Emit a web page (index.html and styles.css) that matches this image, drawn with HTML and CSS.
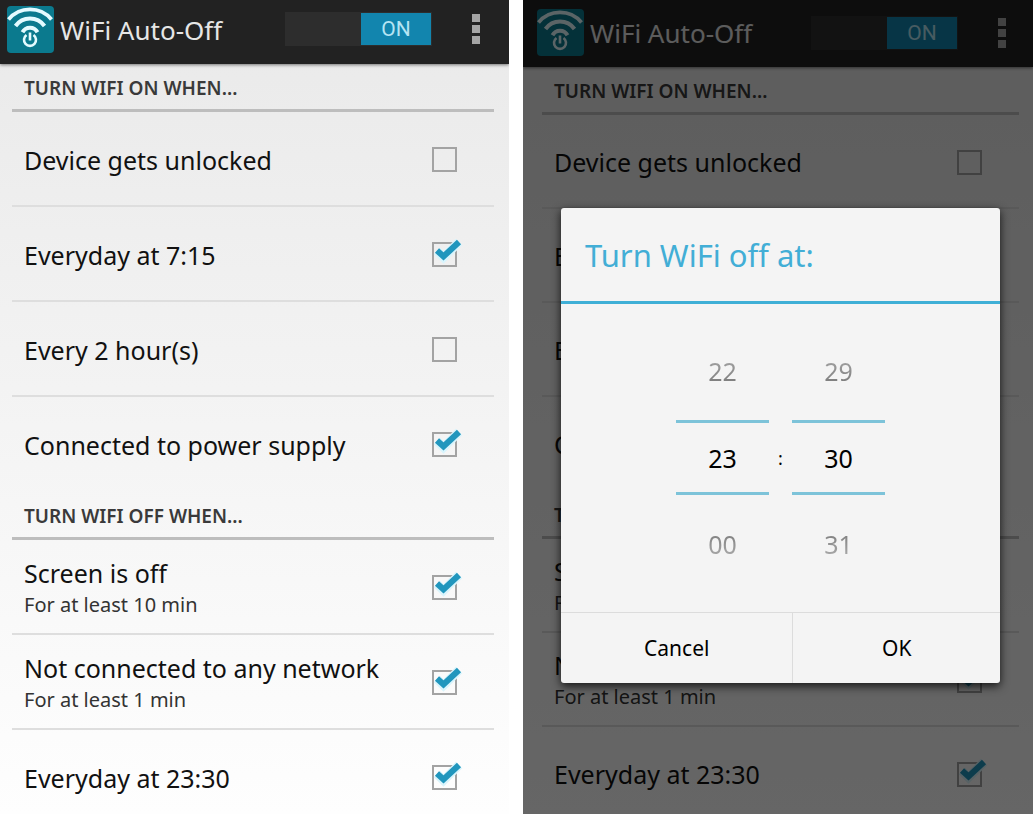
FILE: index.html
```html
<!DOCTYPE html>
<html lang="en">
<head>
  <meta charset="UTF-8">
  <title>WiFi Auto-Off</title>
  <link rel="stylesheet" href="styles.css">
</head>
<body>
  <svg width="0" height="0" class="sprites" aria-hidden="true">
    <symbol id="logo" viewBox="0 0 47 47">
      <rect width="47" height="47" rx="4" fill="#0b7a8e"/>
      <g fill="none" stroke="#e4fbff">
        <path d="M1.500 13.500A28 28 0 0 1 44.500 13.500" stroke-width="3.800"/>
        <path d="M8.500 20A17.800 17.800 0 0 1 37.500 20" stroke-width="4"/>
        <path d="M15.500 26.300A8.500 8.500 0 0 1 30.500 26.300" stroke-width="4"/>
        <path d="M19.500 29A6 6 0 1 0 26.500 29" stroke-width="2.600"/>
        <path d="M23 26.500V34.500" stroke-width="2.600"/>
      </g>
    </symbol>
    <symbol id="tick" viewBox="0 0 34 30">
      <path d="M6 14L12.500 20.500L28 5" fill="none" stroke="#d9f4fc" stroke-width="9"/>
      <path d="M6 13.500L12.500 19.500L28 5" fill="none" stroke="#2196bd" stroke-width="6"/>
    </symbol>
    <symbol id="dots" viewBox="0 0 9 30">
      <path d="M0 0h8v8H0zM0 11h8v8H0zM0 22h8v8H0z" fill="#a5a5a5"/>
    </symbol>
  </svg>

  <div class="screens">
    <section class="screen">
      <header class="bar">
        <svg class="logo"><use href="#logo"/></svg>
        <h1>WiFi Auto-Off</h1>
        <button class="switch" role="switch" aria-checked="true"><span>ON</span></button>
        <button class="menu" aria-label="More options"><svg><use href="#dots"/></svg></button>
      </header>
      <main class="list">
        <h2>TURN WIFI ON WHEN...</h2>
        <label class="row"><span class="text">Device gets unlocked</span>
          <span class="check"><input type="checkbox"><svg><use href="#tick"/></svg></span></label>
        <label class="row"><span class="text">Everyday at 7:15</span>
          <span class="check"><input type="checkbox" checked><svg><use href="#tick"/></svg></span></label>
        <label class="row"><span class="text">Every 2 hour(s)</span>
          <span class="check"><input type="checkbox"><svg><use href="#tick"/></svg></span></label>
        <label class="row last"><span class="text">Connected to power supply</span>
          <span class="check"><input type="checkbox" checked><svg><use href="#tick"/></svg></span></label>
        <h2>TURN WIFI OFF WHEN...</h2>
        <label class="row"><span class="text">Screen is off<small>For at least 10 min</small></span>
          <span class="check"><input type="checkbox" checked><svg><use href="#tick"/></svg></span></label>
        <label class="row"><span class="text">Not connected to any network<small>For at least 1 min</small></span>
          <span class="check"><input type="checkbox" checked><svg><use href="#tick"/></svg></span></label>
        <label class="row last"><span class="text">Everyday at 23:30</span>
          <span class="check"><input type="checkbox" checked><svg><use href="#tick"/></svg></span></label>
      </main>
    </section>

    <section class="screen dimmed">
      <header class="bar">
        <svg class="logo"><use href="#logo"/></svg>
        <h1>WiFi Auto-Off</h1>
        <button class="switch" role="switch" aria-checked="true"><span>ON</span></button>
        <button class="menu" aria-label="More options"><svg><use href="#dots"/></svg></button>
      </header>
      <main class="list">
        <h2>TURN WIFI ON WHEN...</h2>
        <label class="row"><span class="text">Device gets unlocked</span>
          <span class="check"><input type="checkbox"><svg><use href="#tick"/></svg></span></label>
        <label class="row"><span class="text">Everyday at 7:15</span>
          <span class="check"><input type="checkbox" checked><svg><use href="#tick"/></svg></span></label>
        <label class="row"><span class="text">Every 2 hour(s)</span>
          <span class="check"><input type="checkbox"><svg><use href="#tick"/></svg></span></label>
        <label class="row last"><span class="text">Connected to power supply</span>
          <span class="check"><input type="checkbox" checked><svg><use href="#tick"/></svg></span></label>
        <h2>TURN WIFI OFF WHEN...</h2>
        <label class="row"><span class="text">Screen is off<small>For at least 10 min</small></span>
          <span class="check"><input type="checkbox" checked><svg><use href="#tick"/></svg></span></label>
        <label class="row"><span class="text">Not connected to any network<small>For at least 1 min</small></span>
          <span class="check"><input type="checkbox" checked><svg><use href="#tick"/></svg></span></label>
        <label class="row last"><span class="text">Everyday at 23:30</span>
          <span class="check"><input type="checkbox" checked><svg><use href="#tick"/></svg></span></label>
      </main>

      <div class="overlay">
        <div class="dialog" role="dialog" aria-labelledby="dialogTitle">
          <h3 id="dialogTitle">Turn WiFi off at:</h3>
          <div class="picker">
            <div class="wheel">
              <button>22</button>
              <input type="text" value="23" aria-label="Hour">
              <button class="next">00</button>
            </div>
            <span class="colon">:</span>
            <div class="wheel">
              <button>29</button>
              <input type="text" value="30" aria-label="Minute">
              <button class="next">31</button>
            </div>
          </div>
          <div class="actions">
            <button class="cancel">Cancel</button>
            <button class="ok">OK</button>
          </div>
        </div>
      </div>
    </section>
  </div>
</body>
</html>
```

FILE: styles.css
```css
* {
  box-sizing: border-box;
}

body {
  margin: 0;
  background: white;
  font-family: "Noto Sans", sans-serif;
  color: #111;
}

h1, h2, h3 {
  margin: 0;
  font-weight: 400;
}

button, input {
  margin: 0;
  padding: 0;
  border: none;
  background: none;
  font-family: inherit;
  color: inherit;
}

button {
  cursor: pointer;
}

.sprites {
  position: absolute;
}

.screens {
  display: grid;
  grid-template-columns: 509fr 510fr;
  gap: 14px;
  height: 100vh;
}

.screen {
  --bar: 64px;
  --row: 95px;
  position: relative;
  overflow: hidden;
  background: linear-gradient(#e9e9e9, #fefefe);
}

.dimmed {
  --bar: 67px;
  --row: 94px;
  padding-left: 7px;
}

/* top bar */
.bar {
  display: flex;
  align-items: center;
  height: var(--bar);
  padding: 0 28px 6px 7px;
  background: #222;
  box-shadow: 0 1px 3px rgba(0,0,0,0.5);
}

.dimmed .bar {
  margin-left: -7px;
  padding: 0 26px 2px 14px;
}

.logo {
  width: 47px;
  height: 47px;
  margin-right: 6px;
}

h1 {
  flex: 1;
  padding-top: 1px;
  font-size: 26px;
  line-height: 36px;
  color: #e6e6e6;
}

.switch {
  width: 147px;
  height: 34px;
  padding: 1px;
  background: #2d2d2d;
}

.switch span {
  display: block;
  width: 70px;
  margin-left: auto;
  background: #1285ae;
  color: #b5e4f3;
  font-family: Roboto, sans-serif;
  font-size: 21px;
  line-height: 32px;
}

.menu {
  width: 9px;
  height: 30px;
  margin-left: 40px;
}

.menu svg {
  display: block;
  width: 9px;
  height: 30px;
}

/* settings list */
.list {
  padding: 0 15px 0 12px;
}

.dimmed .list {
  padding-right: 14px;
}

h2 {
  height: 48px;
  padding: 10px 12px 0;
  border-bottom: 3px solid #bdbdbd;
  font-size: 19px;
  font-weight: 600;
  line-height: 28px;
  color: #3a3a3a;
}

.row {
  display: flex;
  align-items: center;
  justify-content: space-between;
  height: var(--row);
  padding: 2px 37px 0 12px;
  border-bottom: 2px solid #dedede;
  font-size: 25px;
  line-height: 34px;
}

.row.last {
  border-bottom-color: transparent;
}

.row small {
  display: block;
  font-size: 20px;
  line-height: 30px;
  color: #333;
}

.check {
  position: relative;
  width: 25px;
  height: 25px;
}

.check input {
  display: block;
  appearance: none;
  width: 25px;
  height: 25px;
  border: 2px solid #a3a3a3;
}

.check svg {
  display: none;
  position: absolute;
  left: -1px;
  top: -5px;
  width: 34px;
  height: 30px;
  pointer-events: none;
}

.check input:checked + svg {
  display: block;
}

/* time dialog */
.overlay {
  position: absolute;
  inset: 0;
  padding: 208px 33px 0 38px;
  background: rgba(0,0,0,0.6);
}

.dialog {
  background: #f4f4f4;
  border-radius: 3px;
  box-shadow: 0 3px 10px rgba(0,0,0,0.8);
  color: black;
}

h3 {
  padding: 27px 24px 25px;
  border-bottom: 3px solid #3fafd6;
  font-size: 31px;
  line-height: 41px;
  color: #42aed6;
}

.picker {
  display: flex;
  justify-content: center;
  align-items: center;
  padding: 18px 0 19px;
}

.wheel {
  display: flex;
  flex-direction: column;
  width: 93px;
}

.wheel button {
  height: 98px;
  font-size: 25px;
  background: linear-gradient(#a0a0a0 40%, #808080 60%);
  background-clip: text;
  color: transparent;
}

.wheel .next {
  background: linear-gradient(#808080 40%, #a5a5a5 60%);
  background-clip: text;
}

.wheel input {
  width: 100%;
  height: 75px;
  border: solid #7dc3d9;
  border-width: 3px 0;
  font-size: 25px;
  text-align: center;
}

.colon {
  width: 23px;
  font-size: 18px;
  text-align: center;
}

.actions {
  display: flex;
  border-top: 1px solid #dcdcdc;
}

.actions button {
  height: 70px;
  font-size: 21px;
}

.cancel {
  flex: 232;
  border-right: 1px solid #dcdcdc;
}

.ok {
  flex: 207;
}
```
